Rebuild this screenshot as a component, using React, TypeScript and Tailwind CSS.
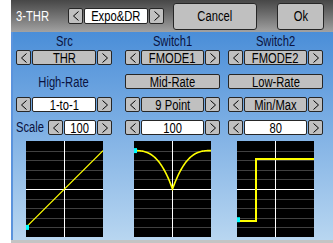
import React from "react";

const font = "font-['Liberation_Sans',sans-serif]";

const T = ({ children, left = false }: { children: React.ReactNode; left?: boolean }) => (
  <span className={`inline-block whitespace-nowrap scale-x-[0.8] ${left ? "origin-left" : "origin-center"}`}>
    {children}
  </span>
);

const Arrow = ({ dir }: { dir: "l" | "r" }) => (
  <div className="w-[15px] h-full shrink-0 flex items-center justify-center bg-[#c0c0c0] border border-[#262626] rounded-[2px]">
    <svg width="6" height="10" viewBox="0 0 6 10">
      <polyline
        points={dir === "l" ? "5.5,0.5 0.5,5 5.5,9.5" : "0.5,0.5 5.5,5 0.5,9.5"}
        fill="none"
        stroke="#000"
        strokeWidth="1"
      />
    </svg>
  </div>
);

const Selector = ({ value, white = true }: { value: string; white?: boolean }) => (
  <div className="flex gap-[1px] h-[15px] w-full">
    <Arrow dir="l" />
    <div
      className={`flex-1 h-full flex items-center justify-center border border-[#262626] rounded-[2px] text-[14px] leading-none text-black ${
        white ? "bg-white" : "bg-[#c0c0c0]"
      }`}
    >
      <T>{value}</T>
    </div>
    <Arrow dir="r" />
  </div>
);

const Button = ({ label }: { label: string }) => (
  <div className="w-full h-[15px] flex items-center justify-center bg-[#c0c0c0] border border-[#262626] rounded-[2px] text-[14px] leading-none text-black">
    <T>{label}</T>
  </div>
);

const W = 77;
const H = 96;
const px = (x: number) => 38.5 + x * 0.385;
const py = (v: number) => 48 - v * 0.384;

const Chart = ({ kind }: { kind: "lin" | "curve" | "step" }) => {
  let curve: React.ReactNode = null;
  let dot = { x: 0, y: 0 };
  if (kind === "lin") {
    curve = <line x1={px(-100)} y1={py(-100)} x2={px(100)} y2={py(100)} stroke="#ffff00" strokeWidth="1.2" />;
    dot = { x: 0, y: py(-100) };
  } else if (kind === "curve") {
    const pts: string[] = [];
    for (let i = -100; i <= 100; i += 2) {
      const t = Math.abs(i) / 100;
      const v = 100 * (1 - Math.pow(1 - t, 2.8));
      pts.push(`${px(i).toFixed(2)},${py(v).toFixed(2)}`);
    }
    curve = <polyline points={pts.join(" ")} fill="none" stroke="#ffff00" strokeWidth="1.6" />;
    dot = { x: 0, y: py(100) };
  } else {
    const lo = Math.round(py(-80)) + 0.5;
    const hi = Math.round(py(80)) + 0.5;
    const sx = Math.round(px(-50));
    curve = (
      <polyline
        points={`0,${lo} ${sx},${lo} ${sx},${hi} ${W},${hi}`}
        fill="none"
        stroke="#ffff00"
        strokeWidth="2"
        shapeRendering="crispEdges"
      />
    );
    dot = { x: 0, y: py(-80) };
  }
  return (
    <div className="w-[77px] h-[96px] bg-black mx-auto">
      <svg width={W} height={H} viewBox={`0 0 ${W} ${H}`} className="block">
        {[1, 2, 3, 4, 6, 7, 8, 9].map((i) => (
          <line
            key={i}
            x1="0"
            x2={W}
            y1={Math.round(i * 9.6) + 0.5}
            y2={Math.round(i * 9.6) + 0.5}
            stroke="#404040"
            strokeWidth="1"
            shapeRendering="crispEdges"
          />
        ))}
        <line x1="0" x2={W} y1="48.5" y2="48.5" stroke="#fff" strokeWidth="1" shapeRendering="crispEdges" />
        <line x1="38.5" x2="38.5" y1="0" y2={H} stroke="#fff" strokeWidth="1" shapeRendering="crispEdges" />
        {curve}
        <rect x="0" y={dot.y - 2.5} width="3" height="5" fill="#00ffff" />
      </svg>
    </div>
  );
};

const Label = ({ text }: { text: string }) => (
  <div className="h-[16px] flex items-center justify-center text-[14px] leading-none text-[#0a1240]">
    <T>{text}</T>
  </div>
);

export default function App() {
  return (
    <div className={`w-[333px] h-[243px] flex bg-white overflow-hidden ${font}`}>
      <div className="w-[11px] shrink-0" />
      <div className="w-[322px] flex flex-col">
        <div className="h-[32px] flex items-center pl-[5px] bg-linear-to-b from-[#474747] to-[#a2a2a2]">
          <div className="w-[52px] text-[14px] leading-none text-white">
            <T left>3-THR</T>
          </div>
          <div className="w-[96px] h-[16px]">
            <div className="flex gap-[1px] h-full">
              <Arrow dir="l" />
              <div className="flex-1 h-full flex items-center justify-center bg-white border border-[#262626] rounded-[2px] text-[14px] leading-none">
                <T>Expo&amp;DR</T>
              </div>
              <Arrow dir="r" />
            </div>
          </div>
          <div className="ml-[9px] w-[84px] h-[27px] flex items-center justify-center bg-[#c0c0c0] border border-[#262626] rounded-[3px] text-[14px] leading-none">
            <T>Cancel</T>
          </div>
          <div className="ml-[20px] w-[47px] h-[27px] flex items-center justify-center bg-[#c0c0c0] border border-[#262626] rounded-[3px] text-[14px] leading-none">
            <T>Ok</T>
          </div>
        </div>
        <div className="h-[208px] border-l-2 border-[#5b93dc] bg-linear-to-b from-[#4a8ed8] to-[#b8d6f0] flex pl-[3px] pt-[1px]">
          <div className="w-[96px] flex flex-col">
            <Label text="Src" />
            <div className="mt-[1px]"><Selector value="THR" white={false} /></div>
            <div className="mt-[9px] h-[15px] flex items-center justify-center text-[14px] leading-none text-[#0a1240]">
              <T>High-Rate</T>
            </div>
            <div className="mt-[8px]"><Selector value="1-to-1" /></div>
            <div className="mt-[8px] flex h-[15px]">
              <div className="w-[32px] text-[14px] leading-[15px] text-[#0a1240]">
                <T left>Scale</T>
              </div>
              <div className="w-[64px]"><Selector value="100" /></div>
            </div>
            <div className="mt-[6px]"><Chart kind="lin" /></div>
          </div>
          <div className="w-[95px] ml-[13px] flex flex-col">
            <Label text="Switch1" />
            <div className="mt-[1px]"><Selector value="FMODE1" white={false} /></div>
            <div className="mt-[9px]"><Button label="Mid-Rate" /></div>
            <div className="mt-[8px]"><Selector value="9 Point" white={false} /></div>
            <div className="mt-[8px]"><Selector value="100" /></div>
            <div className="mt-[6px]"><Chart kind="curve" /></div>
          </div>
          <div className="w-[95px] ml-[8px] flex flex-col">
            <Label text="Switch2" />
            <div className="mt-[1px]"><Selector value="FMODE2" white={false} /></div>
            <div className="mt-[9px]"><Button label="Low-Rate" /></div>
            <div className="mt-[8px]"><Selector value="Min/Max" white={false} /></div>
            <div className="mt-[8px]"><Selector value="80" /></div>
            <div className="mt-[6px]"><Chart kind="step" /></div>
          </div>
        </div>
        <div className="h-[3px] bg-[#c4c4c4]" />
      </div>
    </div>
  );
}
